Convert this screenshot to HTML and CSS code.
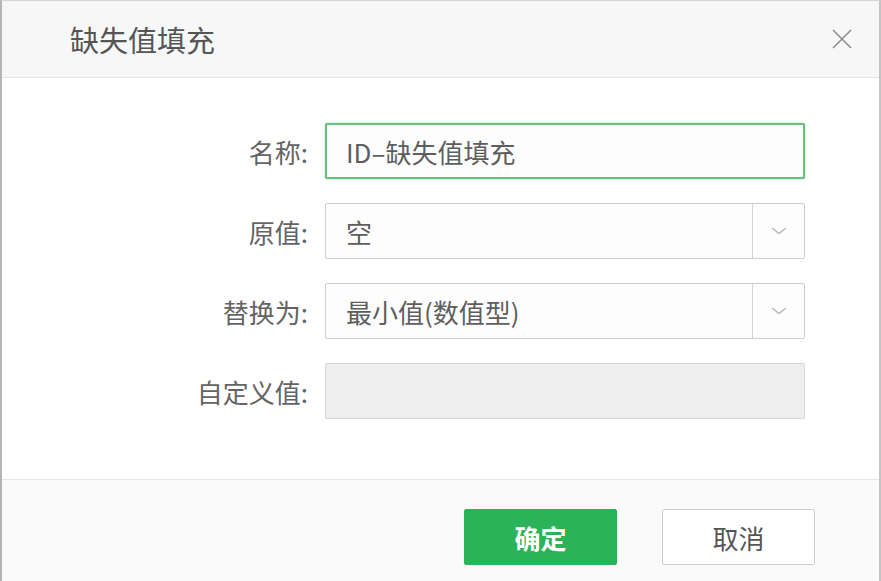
FILE: index.html
```html
<!DOCTYPE html>
<html lang="zh-CN">
<head>
<meta charset="utf-8">
<title>缺失值填充</title>
<link rel="stylesheet" href="styles.css">
</head>
<body>
<div class="dialog">
  <div class="header">
    <div class="title">缺失值填充</div>
    <svg class="close" width="22" height="20" viewBox="0 0 22 20"><path d="M2 1 L20 19 M20 1 L2 19" stroke="#8a8a8a" stroke-width="1.5" fill="none"/></svg>
  </div>
  <div class="body">
    <div class="form">
      <div class="label">名称:</div>
      <div class="field input focus">ID–缺失值填充</div>
      <div class="label">原值:</div>
      <div class="field select"><span class="value">空</span><span class="arrow"><svg width="16" height="8" viewBox="0 0 16 8"><path d="M1 1 L8 6.5 L15 1" stroke="#b8b8b8" stroke-width="1.5" fill="none"/></svg></span></div>
      <div class="label">替换为:</div>
      <div class="field select"><span class="value">最小值(数值型)</span><span class="arrow"><svg width="16" height="8" viewBox="0 0 16 8"><path d="M1 1 L8 6.5 L15 1" stroke="#b8b8b8" stroke-width="1.5" fill="none"/></svg></span></div>
      <div class="label">自定义值:</div>
      <div class="field disabled"></div>
    </div>
  </div>
  <div class="footer">
    <div class="btn primary">确定</div>
    <div class="btn">取消</div>
  </div>
</div>
</body>
</html>
```

FILE: styles.css
```css
html, body {
  margin: 0;
  padding: 0;
  background: #ffffff;
}
body {
  font-family: "Noto Sans CJK SC", "Noto Sans", sans-serif;
  color: #5e5e5e;
}
.dialog {
  width: 881px;
  height: 581px;
  box-sizing: border-box;
  border-top: 1px solid #d4d4d4;
  border-left: 2px solid #b4b4b4;
  border-right: 2px solid #c4c4c4;
  display: flex;
  flex-direction: column;
  background: #ffffff;
}
.header {
  height: 76px;
  flex: none;
  background: #f7f7f7;
  border-bottom: 1px solid #e4e4e4;
  display: flex;
  align-items: center;
  justify-content: space-between;
  padding: 0 26px 0 68px;
}
.title {
  font-size: 29px;
  color: #555555;
  line-height: 1;
}
.close {
  display: block;
}
.body {
  flex: 1;
  padding-top: 45px;
}
.form {
  display: grid;
  grid-template-columns: 306px 480px;
  column-gap: 17px;
  row-gap: 24px;
  grid-auto-rows: 56px;
}
.label {
  font-size: 26px;
  color: #646464;
  display: flex;
  align-items: center;
  justify-content: flex-end;
}
.field {
  box-sizing: border-box;
  border: 1px solid #cfcfcf;
  border-radius: 2px;
  font-size: 26px;
  color: #5e5e5e;
  display: flex;
  align-items: center;
  background: #fdfdfd;
}
.input {
  padding-left: 20px;
}
.focus {
  border: 2px solid #6abd7a;
  box-shadow: 0 0 3px rgba(90, 180, 100, 0.45);
  padding-left: 19px;
}
.select .value {
  flex: 1;
  padding-left: 20px;
}
.select .arrow {
  width: 51px;
  height: 100%;
  border-left: 1px solid #d4d4d4;
  display: flex;
  align-items: center;
  justify-content: center;
}
.select .arrow svg {
  display: block;
}
.disabled {
  background: #eeeeee;
  border-color: #d6d6d6;
}
.footer {
  height: 102px;
  flex: none;
  box-sizing: border-box;
  border-top: 1px solid #e6e6e6;
  background: #fafafa;
  display: flex;
  justify-content: flex-end;
  align-items: flex-start;
  gap: 45px;
  padding: 29px 64px 0 0;
}
.btn {
  width: 153px;
  height: 56px;
  box-sizing: border-box;
  border: 1px solid #cccccc;
  border-radius: 2px;
  background: #ffffff;
  font-size: 26px;
  color: #555555;
  display: flex;
  align-items: center;
  justify-content: center;
}
.btn.primary {
  background: #2bb35a;
  border-color: #2bb35a;
  color: #ffffff;
  font-weight: 700;
}
```
